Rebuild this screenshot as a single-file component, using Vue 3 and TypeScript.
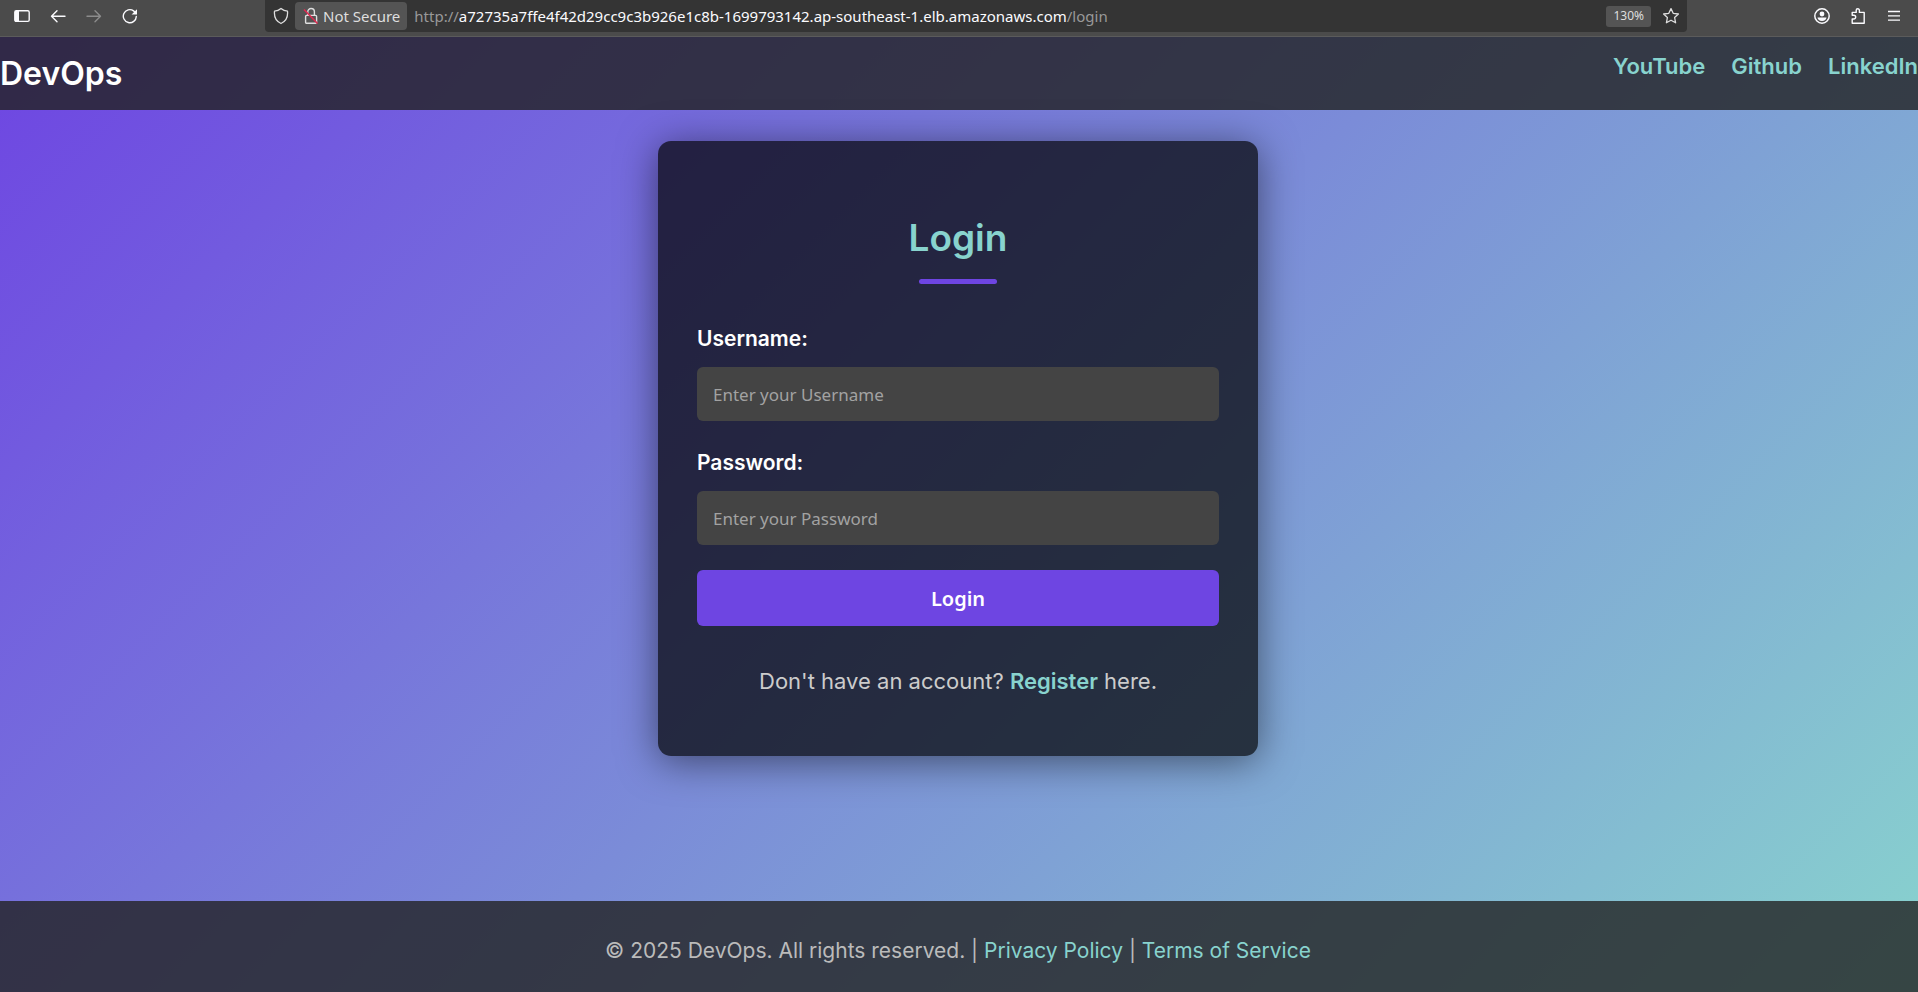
<script setup lang="ts">
import { ref } from 'vue'

interface NavLink {
  label: string
  href: string
}

const links: NavLink[] = [
  { label: 'YouTube', href: '#youtube' },
  { label: 'Github', href: '#github' },
  { label: 'LinkedIn', href: '#linkedin' },
]

const username = ref('')
const password = ref('')
</script>

<template>
  <div class="window">
    <div class="toolbar">
      <div class="tools">
        <button class="tool" type="button" aria-label="Sidebar">
          <svg width="16" height="16" viewBox="0 0 16 16">
            <rect x="0.8" y="2.8" width="14.4" height="10.6" rx="1.4" fill="none" stroke="currentColor" stroke-width="1.4" />
            <path d="M1 3h4v10.400H1z" fill="currentColor" />
          </svg>
        </button>
        <button class="tool" type="button" aria-label="Back">
          <svg width="16" height="16" viewBox="0 0 16 16" fill="none" stroke="currentColor" stroke-width="1.4" stroke-linecap="round" stroke-linejoin="round">
            <path d="M15 8.300H1.700M7 2.800L1.500 8.300L7 13.800" />
          </svg>
        </button>
        <button class="tool" type="button" aria-label="Forward" disabled>
          <svg width="16" height="16" viewBox="0 0 16 16" fill="none" stroke="currentColor" stroke-width="1.4" stroke-linecap="round" stroke-linejoin="round">
            <path d="M1 8.300h13.300M9 2.800l5.500 5.500L9 13.800" />
          </svg>
        </button>
        <button class="tool" type="button" aria-label="Reload">
          <svg width="16" height="16" viewBox="0 0 16 16">
            <path d="M14.300 8.400A6.500 6.500 0 1 1 11.600 2.900L13.500 4.700" fill="none" stroke="currentColor" stroke-width="1.4" stroke-linecap="round" />
            <path d="M15 1.200v5.200H9.600z" fill="currentColor" />
          </svg>
        </button>
      </div>

      <div class="address">
        <button class="shield" type="button" aria-label="Tracking protection">
          <svg width="16" height="18" viewBox="0 0 16 18" fill="none" stroke="currentColor" stroke-width="1.3" stroke-linejoin="round">
            <path d="M8 1.500C10 3.200 12.300 4 14.500 4.200C15 9.500 12.800 14.500 8 16.500C3.200 14.500 1 9.500 1.500 4.200C3.700 4 6 3.200 8 1.500z" />
          </svg>
        </button>
        <button class="security" type="button">
          <svg width="16" height="18" viewBox="0 0 16 18" fill="none">
            <rect x="2.600" y="8.400" width="11" height="7.800" rx="1" stroke="currentColor" stroke-width="1.400" />
            <path d="M4.800 8.400V4.800a3.300 3.300 0 0 1 6.600 0v3.600" stroke="currentColor" stroke-width="1.400" />
            <path d="M1 2.500L14.500 16.500" stroke="#e22850" stroke-width="1.500" />
          </svg>
          <span>Not Secure</span>
        </button>
        <span class="url">http://<b>a72735a7ffe4f42d29cc9c3b926e1c8b-1699793142.ap-southeast-1.elb.amazonaws.com</b>/login</span>
        <button class="zoom" type="button">130%</button>
        <button class="star" type="button" aria-label="Bookmark">
          <svg width="18" height="18" viewBox="0 0 18 18" fill="none" stroke="currentColor" stroke-width="1.300" stroke-linejoin="round">
            <path d="M9 1.600l2.200 4.700 5.200.7-3.800 3.500 1 5.300L9 13.200l-4.600 2.600 1-5.300L1.600 7l5.200-.7z" />
          </svg>
        </button>
      </div>

      <div class="extras">
        <button class="tool" type="button" aria-label="Account">
          <svg width="18" height="18" viewBox="0 0 18 18">
            <circle cx="9" cy="9" r="7.200" fill="none" stroke="currentColor" stroke-width="1.500" />
            <circle cx="9" cy="7" r="2.400" fill="currentColor" />
            <path d="M4.500 10.500h9c0 2-2 3.400-4.500 3.400s-4.500-1.400-4.500-3.400z" fill="currentColor" />
          </svg>
        </button>
        <button class="tool" type="button" aria-label="Extensions">
          <svg width="18" height="18" viewBox="0 0 18 18" fill="none" stroke="currentColor" stroke-width="1.400" stroke-linejoin="round">
            <path d="M3.200 16.200V12h1.600a1.900 1.900 0 0 0 0-3.800H3.200V5.400h4V3.300a1.600 1.600 0 0 1 3.200 0v2.100h4.800v10.800z" />
          </svg>
        </button>
        <button class="tool" type="button" aria-label="Menu">
          <svg width="18" height="18" viewBox="0 0 18 18" stroke="currentColor" stroke-width="1.300">
            <path d="M3 4.500h12M3 8.800h12M3 13.100h12" />
          </svg>
        </button>
      </div>
    </div>

    <div class="page">
      <header class="header">
        <div class="brand">DevOps</div>
        <nav class="nav">
          <a v-for="link in links" :key="link.label" :href="link.href">{{ link.label }}</a>
        </nav>
      </header>

      <main class="main">
        <form class="card" @submit.prevent>
          <h1>Login</h1>
          <label for="username">Username:</label>
          <input id="username" v-model="username" type="text" placeholder="Enter your Username" />
          <label for="password">Password:</label>
          <input id="password" v-model="password" type="password" placeholder="Enter your Password" />
          <button class="submit" type="submit">Login</button>
          <p>Don't have an account? <a href="#register">Register</a> here.</p>
        </form>
      </main>

      <footer class="footer">
        <p>© 2025 DevOps. All rights reserved. | <a href="#privacy">Privacy Policy</a> | <a href="#terms">Terms of Service</a></p>
      </footer>
    </div>
  </div>
</template>

<style>
body {
  margin: 0;
}
</style>

<style scoped>
.window {
  min-height: 100vh;
  display: flex;
  flex-direction: column;
  overflow-x: hidden;
  font-family: Inter, "Liberation Sans", sans-serif;
}

.window *,
.window *::after {
  box-sizing: border-box;
}

button {
  border: 0;
  padding: 0;
  background: none;
  color: inherit;
  font: inherit;
}

a {
  color: #88d3ce;
  text-decoration: none;
}

/* Browser toolbar */
.toolbar {
  height: 37px;
  display: grid;
  grid-template-columns: 265px minmax(0, 1422px) 231px;
  align-items: start;
  background: #4b4b4b;
  border-bottom: 1px solid #5b5b5b;
  color: #fbfbfe;
  font-family: "Noto Sans", "Open Sans", sans-serif;
  font-size: 15px;
  line-height: 20px;
}

.tools {
  height: 32px;
  display: flex;
  align-items: center;
  gap: 20px;
  padding-left: 14px;
}

.tools .tool {
  width: 16px;
}

.tool {
  display: flex;
}

.tool:disabled {
  color: #8c8c8c;
}

.address {
  height: 32px;
  display: flex;
  align-items: center;
  background: #343434;
  border-radius: 0 0 4px 4px;
  padding-right: 7px;
  color: #dedede;
}

.shield {
  display: flex;
  width: 30px;
  padding-left: 8px;
}

.security {
  height: 28px;
  display: flex;
  align-items: center;
  gap: 4px;
  padding: 0 7px 0 8px;
  border-radius: 4px;
  background: #545454;
  white-space: nowrap;
}

.url {
  flex: 1;
  min-width: 0;
  overflow: hidden;
  padding-left: 7px;
  color: #999;
  white-space: nowrap;
}

.url b {
  color: #fbfbfe;
  font-weight: 400;
}

.zoom {
  height: 21px;
  padding: 0 7px;
  margin-right: 11px;
  border-radius: 3px;
  background: #545454;
  font-size: 12px;
}

.star {
  display: flex;
}

.extras {
  height: 32px;
  display: flex;
  align-items: center;
  justify-content: flex-end;
  gap: 18px;
  padding-right: 15px;
}

/* Login page */
.page {
  flex: 1;
  display: flex;
  flex-direction: column;
  background: linear-gradient(135deg, #6e45e2, #88d3ce);
}

.header {
  display: flex;
  justify-content: space-between;
  align-items: flex-start;
  padding: 13px 0;
  background: rgba(34, 34, 34, 0.8);
}

.brand {
  font-size: 32px;
  line-height: 47px;
  font-weight: 600;
  color: #fff;
}

.nav {
  display: flex;
  gap: 26px;
  font-size: 22px;
  line-height: 32px;
  font-weight: 600;
}

.main {
  flex: 1;
  display: flex;
  justify-content: center;
  align-items: flex-start;
  padding: 31px 22px 31px 20px;
}

.card {
  width: 100%;
  max-width: 600px;
  display: flex;
  flex-direction: column;
  padding: 68px 39px 59px;
  border-radius: 13px;
  background: rgba(0, 0, 0, 0.7);
  box-shadow: 0 5px 39px rgba(0, 0, 0, 0.5);
}

.card h1 {
  margin: 0 0 38px;
  color: #88d3ce;
  font-size: 37px;
  line-height: 58px;
  font-weight: 600;
  text-align: center;
}

.card h1::after {
  content: "";
  display: block;
  width: 78px;
  height: 5px;
  margin: 12px auto 0;
  border-radius: 3px;
  background: #6e45e2;
}

.card label {
  margin-bottom: 11px;
  color: #fff;
  font-size: 21px;
  line-height: 34px;
  font-weight: 600;
}

.card input {
  width: 100%;
  height: 54px;
  margin-bottom: 25px;
  padding: 0 16px;
  border: 0;
  border-radius: 6px;
  background: #444;
  color: #fff;
  font: 17px "Noto Sans", "Open Sans", sans-serif;
}

.card input::placeholder {
  color: #a2a2a2;
  opacity: 1;
}

.submit {
  height: 56px;
  border-radius: 6px;
  background: #6e45e2;
  color: #fff;
  font: 600 20px "Noto Sans", "Open Sans", sans-serif;
}

.card p {
  margin: 39px 0 0;
  color: #ccc;
  font-size: 22px;
  line-height: 32px;
  text-align: center;
}

.card p a {
  font-weight: 600;
}

.footer {
  padding: 34px 22px 25px 20px;
  background: rgba(34, 34, 34, 0.8);
  color: #bbb;
  font-size: 21px;
  line-height: 32px;
  text-align: center;
}

.footer p {
  margin: 0;
}
</style>
